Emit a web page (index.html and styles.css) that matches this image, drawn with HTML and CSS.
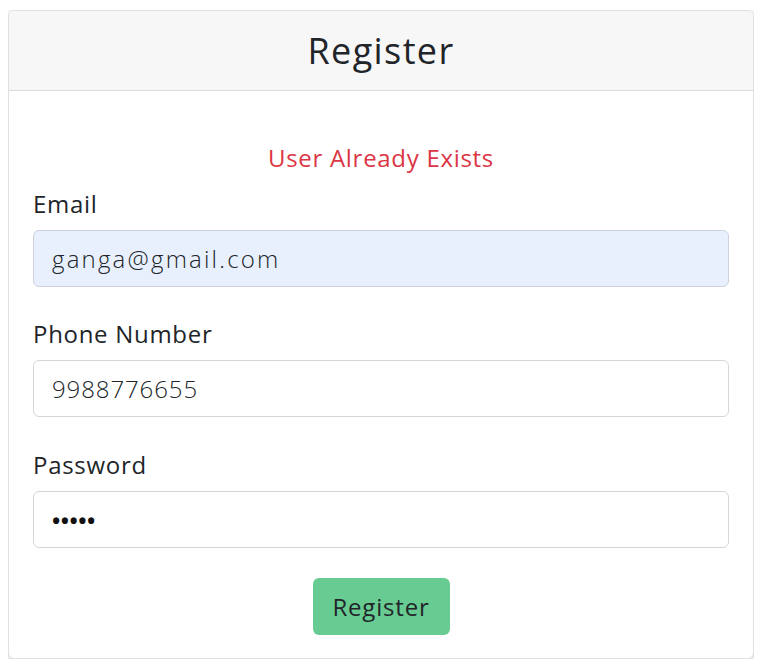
FILE: index.html
```html
<!DOCTYPE html>
<html>
<head>
<meta charset="utf-8">
<link rel="stylesheet" href="styles.css">
</head>
<body>
<div class="card">
  <div class="card-header">
    <h3 class="title">Register</h3>
  </div>
  <form class="card-body">
    <p class="error">User Already Exists</p>
    <div class="field">
      <label class="label" for="email">Email</label>
      <input class="input autofilled" id="email" type="text" value="ganga@gmail.com">
    </div>
    <div class="field">
      <label class="label" for="phone">Phone Number</label>
      <input class="input digits" id="phone" type="text" value="9988776655">
    </div>
    <div class="field last">
      <label class="label" for="pw">Password</label>
      <input class="input pw" id="pw" type="password" value="12345">
    </div>
    <div class="actions">
      <button class="btn" type="button">Register</button>
    </div>
  </form>
</div>
</body>
</html>
```

FILE: styles.css
```css
* { box-sizing: border-box; }
html, body { background: #fff; }
body {
  margin: 10px 6px 0 8px;
  font-family: "Open Sans", "Liberation Sans", sans-serif;
  color: #212529;
}
.card {
  border: 1px solid #e0e0e0;
  border-radius: 6px;
  background: #fff;
  box-shadow: 0 2px 9px rgba(0,0,0,0.22);
  overflow: hidden;
}
.card-header {
  background: #f7f7f7;
  border-bottom: 1px solid #dcdcdc;
  height: 80px;
  display: flex;
  align-items: center;
  justify-content: center;
}
.title {
  margin: 0;
  font-size: 36px;
  font-weight: 400;
  letter-spacing: 1.4px;
  line-height: 1.2;
  color: #212529;
}
.card-body {
  padding: 49px 24px 23px;
  display: flex;
  flex-direction: column;
}
.error {
  margin: 0 0 10px;
  text-align: center;
  color: #dc3545;
  font-size: 24px;
  letter-spacing: 0.7px;
  line-height: 36px;
}
.field {
  display: flex;
  flex-direction: column;
  margin-bottom: 29px;
}
.field.last {
  margin-top: 1px;
}
.label {
  font-size: 24px;
  letter-spacing: 0.7px;
  line-height: 36px;
  margin-bottom: 8px;
  font-weight: 500;
}
.input {
  height: 57px;
  border: 1px solid #d6d6d6;
  border-radius: 6px;
  padding: 0 18px;
  font-family: inherit;
  font-size: 24px;
  font-weight: 300;
  letter-spacing: 2.2px;
  color: #212529;
  background: #fff;
  outline: none;
}
.input.digits {
  letter-spacing: 0.9px;
}
.input.pw {
  font-size: 22px;
  font-weight: 700;
  letter-spacing: 0.5px;
  color: #111;
}
.input.autofilled {
  background: #e8f0fe;
  border-color: #cdd3de;
}
.actions {
  display: flex;
  justify-content: center;
  margin-top: 1px;
}
.btn {
  height: 57px;
  width: 137px;
  border: none;
  border-radius: 6px;
  background: #68cc92;
  color: #212529;
  font-family: inherit;
  font-size: 24px;
  letter-spacing: 0.8px;
  font-weight: 400;
}
```
